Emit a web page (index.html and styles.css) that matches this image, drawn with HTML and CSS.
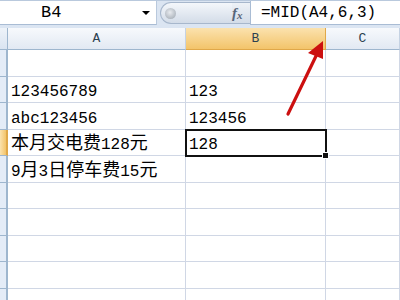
FILE: index.html
```html
<!DOCTYPE html>
<html>
<head>
<meta charset="utf-8">
<link rel="stylesheet" href="styles.css">
</head>
<body>
<div class="app">
  <div class="fbar">
    <div class="namebox"><span class="name">B4</span><span class="drop"></span></div>
    <div class="pill"><span class="ball"></span></div>
    <div class="fx"><i>f</i><i class="x">x</i></div>
    <div class="input">=MID(A4,6,3)</div>
  </div>
  <div class="sheet">
    <div class="corner"></div>
    <div class="ch">A</div>
    <div class="ch on">B</div>
    <div class="ch">C</div>

    <div class="rh"></div><div class="c"></div><div class="c"></div><div class="c"></div>
    <div class="rh"></div><div class="c"><span class="t">123456789</span></div><div class="c"><span class="t">123</span></div><div class="c"></div>
    <div class="rh"></div><div class="c"><span class="t">abc123456</span></div><div class="c"><span class="t">123456</span></div><div class="c"></div>
    <div class="rh on"></div><div class="c"><span class="t"><span class="k">本月交电费</span>128<span class="k">元</span></span></div><div class="c sel"><span class="t">128</span></div><div class="c"></div>
    <div class="rh"></div><div class="c"><span class="t">9<span class="k">月</span>3<span class="k">日停车费</span>15<span class="k">元</span></span></div><div class="c"></div><div class="c"></div>
    <div class="rh"></div><div class="c"></div><div class="c"></div><div class="c"></div>
    <div class="rh"></div><div class="c"></div><div class="c"></div><div class="c"></div>
    <div class="rh"></div><div class="c"></div><div class="c"></div><div class="c"></div>
    <div class="rh"></div><div class="c"></div><div class="c"></div><div class="c"></div>
    <div class="rh"></div><div class="c"></div><div class="c"></div><div class="c"></div>
  </div>
  <svg class="arrow" width="400" height="300" viewBox="0 0 400 300">
    <line x1="288" y1="114" x2="317" y2="54" stroke="#cc1010" stroke-width="3.2" stroke-linecap="round"/>
    <polygon points="323,41 308,53 323,59" fill="#cc1010"/>
  </svg>
</div>
</body>
</html>
```

FILE: styles.css
```css
html, body {
  margin: 0;
  padding: 0;
  background: #fff;
}
.app {
  position: relative;
  width: 400px;
  height: 300px;
  overflow: hidden;
  font-family: "Liberation Mono", "Noto Sans CJK SC", monospace;
  color: #000;
}
.fbar {
  display: flex;
  height: 28px;
  box-sizing: border-box;
  background: #dbe5f2;
  border-top: 1px solid #b9c9dd;
  padding-bottom: 3px;
}
.namebox {
  width: 157px;
  display: flex;
  align-items: center;
  background: #fff;
  border-right: 1px solid #b9c9dd;
  border-bottom: 1px solid #a9bcd4;
  box-sizing: border-box;
}
.name {
  font-size: 17px;
  padding-left: 41px;
  flex: 1;
}
.drop {
  width: 0;
  height: 0;
  border-left: 4px solid transparent;
  border-right: 4px solid transparent;
  border-top: 4px solid #000;
  margin-right: 6px;
}
.pill {
  width: 72px;
  margin: 1px 0 1px 3px;
  border-radius: 12px 0 0 12px;
  background: linear-gradient(#f4f7fb, #d3dce8);
  border: 1px solid #a7b7cc;
  border-right: none;
  display: flex;
  align-items: center;
  padding-left: 4px;
  box-sizing: border-box;
}
.ball {
  width: 11px;
  height: 11px;
  border-radius: 50%;
  background: radial-gradient(circle at 45% 40%, #e8ebef, #9aa3ad);
}
.fx {
  width: 18px;
  display: flex;
  align-items: center;
  font-family: "Liberation Serif", serif;
  font-weight: bold;
  color: #56667a;
  font-size: 15px;
  background: linear-gradient(#eef2f7, #d3dce8);
  border-top: 1px solid #a7b7cc;
  border-bottom: 1px solid #a7b7cc;
  margin: 1px 0;
}
.fx .x {
  font-size: 11px;
  margin-top: 4px;
}
.input {
  flex: 1;
  background: #fff;
  border-left: 1px solid #a9bcd4;
  border-bottom: 1px solid #a9bcd4;
  font-size: 16px;
  padding-left: 10px;
  display: flex;
  align-items: center;
}
.sheet {
  display: grid;
  grid-template-columns: 8px 178px 140px 1fr;
  grid-template-rows: 22px 27px 26px 27px 26px 27px 26px 27px 26px 27px 26px;
}
.sheet > div {
  box-sizing: border-box;
}
.corner {
  background: linear-gradient(#eef3f9, #dae4f1);
  border-right: 1px solid #9eb6ce;
  border-bottom: 1px solid #9eb6ce;
}
.ch {
  background: linear-gradient(#f7f9fc, #e2e9f3);
  border-right: 1px solid #c5d2e3;
  border-bottom: 1px solid #9eb6ce;
  text-align: center;
  font-size: 13px;
  line-height: 22px;
  color: #2c4050;
}
.ch.on {
  background: linear-gradient(#fbe2ae, #f3c46a);
  border-right: 1px solid #e0a849;
  border-bottom: 1px solid #e0a849;
}
.rh {
  background: #e4ecf7;
  border-right: 2px solid #9eb6ce;
  border-bottom: 1px solid #9eb6ce;
}
.rh.on {
  background: linear-gradient(90deg, #fbe2ae, #f3c46a);
  border-right: 2px solid #e0a849;
}
.c {
  border-right: 1px solid #d0d7e5;
  border-bottom: 1px solid #d0d7e5;
  padding: 0 3px 1px;
  display: flex;
  align-items: flex-end;
  white-space: nowrap;
}
.t {
  font-size: 16px;
  line-height: 18px;
}
.k {
  font-family: "Noto Sans CJK SC", sans-serif;
  font-size: 18px;
  line-height: 18px;
}
.sel {
  position: relative;
}
.sel::before {
  content: "";
  position: absolute;
  left: -1px;
  top: -1px;
  right: -2px;
  bottom: -2px;
  border: 2px solid #111;
}
.sel::after {
  content: "";
  position: absolute;
  right: -4px;
  bottom: -4px;
  width: 5px;
  height: 5px;
  background: #111;
  border: 1px solid #fff;
}
.arrow {
  position: absolute;
  left: 0;
  top: 0;
}
```
